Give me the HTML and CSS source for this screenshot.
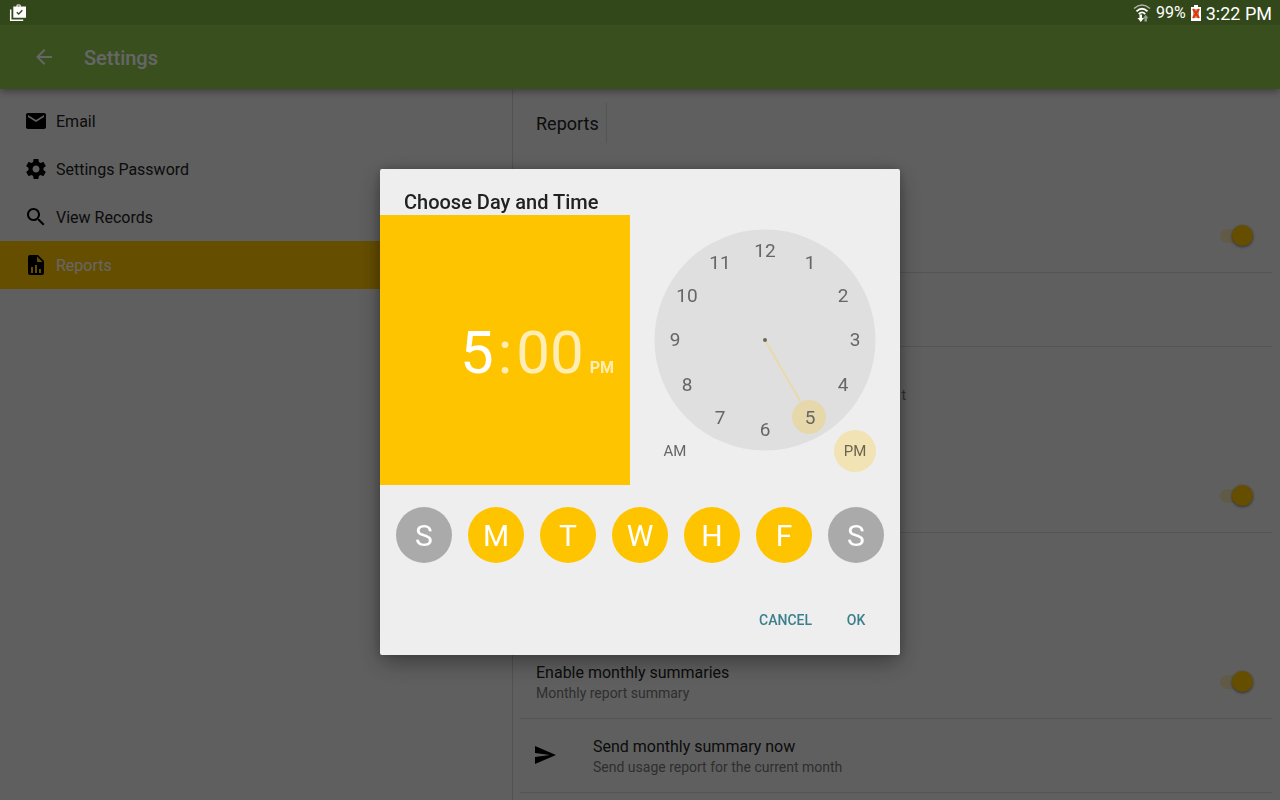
FILE: index.html
```html
<!DOCTYPE html>
<html lang="en">
<head>
<meta charset="utf-8">
<meta name="viewport" content="width=device-width, initial-scale=1">
<title>Settings</title>
<link rel="stylesheet" href="styles.css">
</head>
<body>
<div class="screen">
  <div class="statusbar">
    <svg class="notice" viewBox="0 0 18 18" width="18" height="18" aria-hidden="true">
      <path d="M1.700 5.500v10.800h12.500" fill="none" stroke="#fff" stroke-width="1.500"/>
      <path d="M4.300 2.600h3.200V1.500q0-1 1-1h2.200q1 0 1 1v1.100H17V13.800H4.300zM8.500 2.600h2.200V1.500H8.500z" fill="#fff" fill-rule="evenodd"/>
      <path d="M7.800 8.200l1.900 1.900 3.600-3.900" fill="none" stroke="#32481a" stroke-width="1.400"/>
    </svg>
    <div class="status-right">
      <svg class="wifi" viewBox="0 0 18 18" width="18" height="18" aria-hidden="true">
        <g fill="none" stroke="#fff">
          <path d="M1 4.500Q9-2.500 17 4.500" stroke-width="1.500" opacity=".6"/>
          <path d="M3.500 7.400Q9 2.200 14.500 7.400M5.800 10Q9 6.800 12.200 10" stroke-width="1.900"/>
        </g>
        <path d="M6.500 10.500H9V14h2l-3.200 4-3.300-4h2z" fill="#fff"/>
        <path d="M11.500 17.500v-3.200H9.900l2.800-3.500 2.800 3.500h-1.600v3.200z" fill="#fff" opacity=".5"/>
      </svg>
      <span class="battery-text">99%</span>
      <svg class="battery" viewBox="0 0 10 16" width="10" height="16" aria-hidden="true">
        <path d="M3 0h4v2h3v14H0V2h3z" fill="#fff"/>
        <path d="M2 4h6v9H2z" fill="#6b6b5a" opacity=".6"/>
        <path d="M2 4l6 9M8 4l-6 9" stroke="#f42c00" stroke-width="2.200"/>
      </svg>
      <span class="clock-text">3:22 PM</span>
    </div>
  </div>

  <header class="appbar">
    <button class="back" type="button" aria-label="Back">
      <svg viewBox="0 0 24 24" width="24" height="24"><path fill="currentColor" d="M20 11H7.830l5.590-5.590L12 4l-8 8 8 8 1.410-1.410L7.830 13H20z"/></svg>
    </button>
    <h1 class="appbar-title">Settings</h1>
  </header>

  <main class="panes">
    <nav class="sidebar">
      <a class="nav-item" href="#email">
        <svg viewBox="0 0 24 24" width="24" height="24"><path d="M20 4H4c-1.100 0-1.990.9-1.990 2L2 18c0 1.100.9 2 2 2h16c1.100 0 2-.9 2-2V6c0-1.100-.9-2-2-2zm0 4l-8 5-8-5V6l8 5 8-5z"/></svg>
        <span>Email</span>
      </a>
      <a class="nav-item" href="#password">
        <svg viewBox="0 0 24 24" width="24" height="24"><path d="M19.430 12.980c.04-.32.07-.64.07-.98s-.03-.66-.07-.98l2.110-1.650c.19-.15.24-.42.12-.64l-2-3.460c-.12-.22-.39-.3-.61-.22l-2.490 1c-.52-.4-1.080-.73-1.690-.98l-.38-2.650C14.460 2.180 14.250 2 14 2h-4c-.25 0-.46.18-.49.42l-.38 2.650c-.61.25-1.170.59-1.690.98l-2.490-1c-.23-.09-.49 0-.61.22l-2 3.460c-.13.22-.07.49.12.64l2.110 1.650c-.04.32-.07.65-.07.98s.03.66.07.98l-2.110 1.650c-.19.15-.24.42-.12.64l2 3.460c.12.22.39.3.61.22l2.490-1c.52.4 1.080.73 1.690.98l.38 2.650c.03.24.24.42.49.42h4c.25 0 .46-.18.49-.42l.38-2.650c.61-.25 1.170-.59 1.690-.98l2.490 1c.23.09.49 0 .61-.22l2-3.460c.12-.22.07-.49-.12-.64l-2.110-1.650zM12 15.500c-1.930 0-3.500-1.570-3.500-3.500s1.570-3.500 3.500-3.500 3.500 1.570 3.500 3.500-1.570 3.500-3.500 3.500z"/></svg>
        <span>Settings Password</span>
      </a>
      <a class="nav-item" href="#records">
        <svg viewBox="0 0 24 24" width="24" height="24"><path d="M15.500 14h-.79l-.28-.27C15.410 12.590 16 11.110 16 9.500 16 5.910 13.090 3 9.500 3S3 5.910 3 9.500 5.910 16 9.500 16c1.610 0 3.090-.59 4.230-1.570l.27.28v.79l5 4.990L20.490 19l-4.990-5zm-6 0C7.010 14 5 11.990 5 9.500S7.010 5 9.500 5 14 7.010 14 9.500 11.990 14 9.500 14z"/></svg>
        <span>View Records</span>
      </a>
      <a class="nav-item selected" href="#reports" aria-current="page">
        <svg viewBox="0 0 24 24" width="24" height="24"><path fill-rule="evenodd" d="M6 2h8l6 6v12q0 2-2 2H6q-2 0-2-2V4q0-2 2-2zM13 3.500V9h5.500zM7 14v6h2v-6zM11 12v8h2v-8zM15 16v4h2v-4z"/></svg>
        <span>Reports</span>
      </a>
    </nav>

    <section class="detail">
      <div class="heading"><h2 class="heading-text">Reports</h2></div>
      <div class="group">
        <div class="row"><input class="switch" type="checkbox" aria-label="Daily summaries" checked></div>
        <div class="row"></div>
        <div class="row"><p class="summary summary-end">t</p></div>
      </div>
      <div class="group">
        <div class="row"><input class="switch" type="checkbox" aria-label="Weekly summaries" checked></div>
        <div class="row"></div>
      </div>
      <div class="group">
        <div class="row">
          <label class="labels" for="monthly">
            <span class="name">Enable monthly summaries</span>
            <span class="summary">Monthly report summary</span>
          </label>
          <input class="switch" id="monthly" type="checkbox" checked>
        </div>
        <div class="row">
          <svg class="send" viewBox="3 4 21 18" width="21" height="18"><path d="M2.010 21L23 12 2.010 3 2 10l15 2-15 2z"/></svg>
          <div class="labels">
            <span class="name">Send monthly summary now</span>
            <span class="summary">Send usage report for the current month</span>
          </div>
        </div>
        <div class="row"></div>
      </div>
    </section>
  </main>

  <div class="scrim">
    <div class="dialog" role="dialog" aria-modal="true" aria-labelledby="dialog-title">
      <h2 class="dialog-title" id="dialog-title">Choose Day and Time</h2>
      <div class="picker">
        <div class="time">
          <button class="time-part active" type="button">5</button>
          <span class="colon">:</span>
          <button class="time-part" type="button">00</button>
          <span class="period">PM</span>
        </div>
        <div class="dial">
          <svg class="face" viewBox="-111 -111 222 222" width="222" height="222" role="img" aria-label="Clock set to 5">
            <circle r="110.500" fill="#dfdfdf"/>
            <path d="M0 0L35.500 61.500" stroke="#e8daa9" stroke-width="2"/>
            <circle cx="44" cy="77" r="17" fill="#e6d8ab"/>
            <circle r="2" fill="#6b675c"/>
            <g class="hours">
              <text x="0" y="-83">12</text><text x="45" y="-71">1</text><text x="78" y="-38">2</text>
              <text x="90" y="6">3</text><text x="78" y="51">4</text><text x="45" y="84">5</text>
              <text x="0" y="96">6</text><text x="-45" y="84">7</text><text x="-78" y="51">8</text>
              <text x="-90" y="6">9</text><text x="-78" y="-38">10</text><text x="-45" y="-71">11</text>
            </g>
          </svg>
          <div class="periods">
            <button class="period-button" type="button">AM</button>
            <button class="period-button chosen" type="button">PM</button>
          </div>
        </div>
      </div>
      <div class="days">
        <button class="day" type="button">S</button>
        <button class="day on" type="button">M</button>
        <button class="day on" type="button">T</button>
        <button class="day on" type="button">W</button>
        <button class="day on" type="button">H</button>
        <button class="day on" type="button">F</button>
        <button class="day" type="button">S</button>
      </div>
      <div class="actions">
        <button class="action" type="button">Cancel</button>
        <button class="action" type="button">OK</button>
      </div>
    </div>
  </div>
</div>
</body>
</html>
```
FILE: styles.css
```css
* {
  box-sizing: border-box;
}

body {
  margin: 0;
  background: #eeeeee;
  color: #212121;
  font-family: Roboto, "Liberation Sans", sans-serif;
  font-size: 16px;
}

h1, h2, p {
  margin: 0;
}

button {
  padding: 0;
  border: 0;
  background: none;
  color: inherit;
  font: inherit;
}

svg {
  display: block;
  flex: none;
}

.send {
  overflow: visible;
  margin-right: 36px;
}

.screen {
  display: flex;
  flex-direction: column;
  height: 100vh;
  overflow: hidden;
}

/* Status bar */
.statusbar {
  position: relative;
  z-index: 3;
  display: flex;
  flex: none;
  align-items: center;
  justify-content: space-between;
  height: 25px;
  padding: 0 8px 0 9px;
  background: #32481a;
  color: #ffffff;
}

.status-right {
  display: flex;
  align-items: center;
  gap: 5px;
}

.battery-text {
  font-size: 16px;
}

.clock-text {
  padding-top: 2px;
  font-size: 18px;
}

/* App bar */
.appbar {
  position: relative;
  z-index: 1;
  display: flex;
  flex: none;
  align-items: center;
  gap: 28px;
  height: 64px;
  padding: 0 32px;
  background: #8ec54c;
  box-shadow: 0 2px 8px rgba(0, 0, 0, 0.4);
  color: #ffffff;
}

.appbar-title {
  padding-top: 2px;
  font-size: 20px;
  font-weight: 500;
}

/* Panes */
.panes {
  display: grid;
  flex: 1;
  grid-template-columns: 2fr 3fr;
  min-height: 0;
}

.sidebar {
  padding-top: 8px;
}

.nav-item {
  display: flex;
  align-items: center;
  gap: 8px;
  height: 48px;
  padding: 0 24px;
  color: #212121;
  text-decoration: none;
}

.nav-item.selected {
  background: #ffc400;
}

.nav-item.selected span {
  color: #ffffff;
}

.detail {
  padding: 0 8px 0 7px;
  border-left: 1px solid #cccccc;
}

.heading {
  display: flex;
  height: 72px;
  padding: 14px 16px 18px;
}

.heading-text {
  padding: 2px 7px 0 0;
  border-right: 1px solid #d2d2d2;
  font-size: 18px;
  font-weight: 400;
  line-height: 38px;
}

.group {
  padding-top: 38px;
}

.row {
  display: flex;
  align-items: center;
  height: 74px;
  padding: 0 19px 0 16px;
  border-bottom: 1px solid #d2d2d2;
}

.row:last-child {
  border-bottom-color: transparent;
}

.labels {
  display: flex;
  flex-direction: column;
  padding-top: 1px;
}

.name {
  line-height: 21px;
}

.summary {
  color: #757575;
  font-size: 14px;
  line-height: 20px;
}

.summary-end {
  width: 370px;
  padding-top: 22px;
  text-align: right;
}

.switch {
  position: relative;
  width: 33px;
  height: 14px;
  margin: 0 0 0 auto;
  border-radius: 7px;
  background: #f3e2b0;
  appearance: none;
}

.switch::before {
  position: absolute;
  top: -4px;
  right: 0;
  width: 21px;
  height: 21px;
  border-radius: 50%;
  background: #ffc400;
  box-shadow: 0 1px 3px rgba(0, 0, 0, 0.5);
  content: "";
}

/* Dialog */
.scrim {
  position: fixed;
  inset: 0;
  z-index: 2;
  display: flex;
  align-items: center;
  justify-content: center;
  padding-top: 24px;
  background: rgba(0, 0, 0, 0.6);
}

.dialog {
  width: 520px;
  border-radius: 2px;
  background: #eeeeee;
  box-shadow: 0 8px 24px rgba(0, 0, 0, 0.35), 0 0 10px rgba(0, 0, 0, 0.2);
}

.dialog-title {
  padding: 20px 24px 0;
  font-size: 20px;
  font-weight: 500;
  line-height: 26px;
}

.picker {
  display: flex;
}

.time {
  display: flex;
  flex: 1;
  align-items: baseline;
  justify-content: flex-end;
  padding: 103px 16px 0 0;
  background: #ffc400;
  color: rgba(255, 255, 255, 0.7);
  font-size: 60px;
  line-height: 70px;
}

.time-part.active {
  color: #ffffff;
}

.colon {
  padding: 0 4px;
}

.period {
  padding-left: 6px;
  font-size: 16px;
  font-weight: 700;
}

.dial {
  width: 270px;
  padding: 14px 24px 13px;
}

.hours {
  fill: #666666;
  font-size: 19px;
  text-anchor: middle;
}

.periods {
  position: relative;
  display: flex;
  justify-content: space-between;
  margin-top: -21px;
}

.period-button {
  width: 42px;
  height: 42px;
  border-radius: 50%;
  color: #666666;
  font-size: 15px;
}

.period-button.chosen {
  background: #f2e3b4;
  color: #6b6450;
}

.days {
  display: flex;
  justify-content: space-between;
  padding: 22px 16px 0;
}

.day {
  width: 56px;
  height: 56px;
  border-radius: 50%;
  background: #aaaaaa;
  color: #ffffff;
  font-size: 30px;
}

.day.on {
  background: #ffc400;
}

.actions {
  display: flex;
  gap: 4px;
  justify-content: flex-end;
  padding: 39px 12px 17px;
}

.action {
  min-width: 64px;
  height: 36px;
  padding: 0 8px;
  color: #3b7f8c;
  font-size: 14px;
  font-weight: 500;
  text-transform: uppercase;
}
```
